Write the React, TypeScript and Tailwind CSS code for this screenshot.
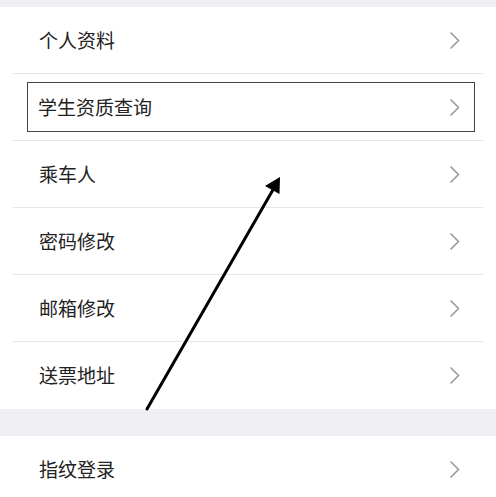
const items = ["个人资料", "学生资质查询", "乘车人", "密码修改", "邮箱修改", "送票地址"];

function Chevron() {
  return (
    <svg width="11" height="19" viewBox="0 0 11 19" fill="none" className="shrink-0">
      <polyline points="1.5,1.5 9.5,9.5 1.5,17.5" stroke="#9a9a9a" strokeWidth="1.6" />
    </svg>
  );
}

export default function App() {
  return (
    <div className="relative w-[496px] h-[497px] overflow-hidden bg-[#efeff4] font-['Noto_Sans_CJK_SC','Noto_Sans',sans-serif] text-[19px] text-[#222]">
      <div className="h-[7px]" />
      <div className="bg-white px-[13px]">
        {items.map((label, i) =>
          i === 1 ? (
            <div key={label} className="h-[67px] border-b border-[#e6e6e6] flex items-center">
              <div className="ml-[14px] mr-[8px] flex-1 h-[50px] border-[1.5px] border-[#444] flex items-center justify-between pl-[10px] pr-[14px]">
                <span>{label}</span>
                <Chevron />
              </div>
            </div>
          ) : (
            <div
              key={label}
              className={`h-[67px] flex items-center justify-between pl-[26px] pr-[23px] ${
                i < items.length - 1 ? "border-b border-[#e6e6e6]" : ""
              }`}
            >
              <span>{label}</span>
              <Chevron />
            </div>
          )
        )}
      </div>
      <div className="h-[27px]" />
      <div className="bg-white px-[13px]">
        <div className="h-[67px] flex items-center justify-between pl-[26px] pr-[23px]">
          <span>指纹登录</span>
          <Chevron />
        </div>
      </div>

      <svg className="absolute inset-0 pointer-events-none" width="496" height="497" viewBox="0 0 496 497">
        <line x1="147" y1="409" x2="274" y2="188" stroke="#000" strokeWidth="3" strokeLinecap="round" />
        <polygon points="280,177 279.5,194 265,186" fill="#000" />
      </svg>
    </div>
  );
}
